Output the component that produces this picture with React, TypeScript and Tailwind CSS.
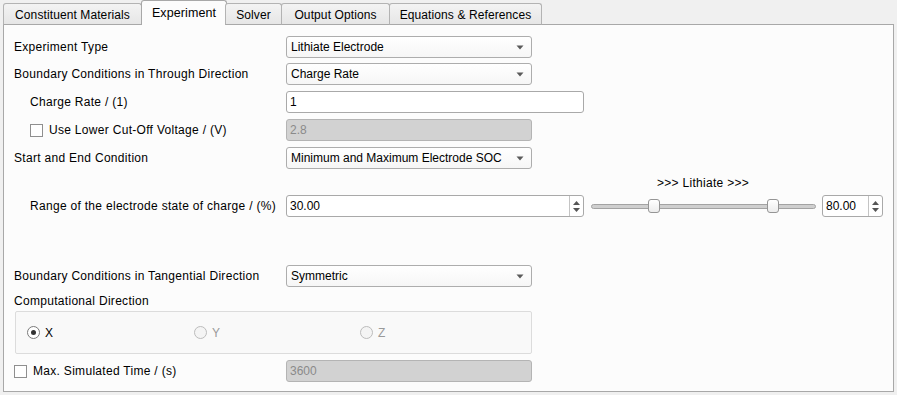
import React from "react";

function Arrow() {
  return (
    <svg width="8" height="5" viewBox="0 0 8 5" className="shrink-0">
      <path d="M0.5 0.5 L7.5 0.5 L4 4.5 Z" fill="#5a5a5a" />
    </svg>
  );
}

function Combo({ text, w = "w-[246px]" }: { text: string; w?: string }) {
  return (
    <div
      className={`${w} h-[22px] flex items-center justify-between pl-[4px] pr-[7px] rounded-[3px] border border-[#adadad] bg-gradient-to-b from-[#ffffff] to-[#f6f6f6] text-[12px] text-[#000] tracking-normal`}
    >
      <span>{text}</span>
      <Arrow />
    </div>
  );
}

function LineEdit({ text, w, disabled }: { text: string; w: string; disabled?: boolean }) {
  return (
    <div
      className={`${w} h-[22px] flex items-center pl-[3px] rounded-[3px] border text-[12px] tracking-normal ${
        disabled ? "bg-[#d2d2d2] border-[#b4b4b4] text-[#8a8a8a]" : "bg-white border-[#a9a9a9] text-black"
      }`}
    >
      {text}
    </div>
  );
}

function SpinArrows() {
  return (
    <div className="w-[14px] h-full flex flex-col items-center justify-center gap-[3px] border-l border-[#c4c4c4]">
      <svg width="7" height="4" viewBox="0 0 7 4">
        <path d="M0 4 L3.5 0 L7 4 Z" fill="#555" />
      </svg>
      <svg width="7" height="4" viewBox="0 0 7 4">
        <path d="M0 0 L3.5 4 L7 0 Z" fill="#555" />
      </svg>
    </div>
  );
}

function Spin({ text, w }: { text: string; w: string }) {
  return (
    <div className={`${w} h-[22px] flex items-stretch rounded-[3px] border border-[#a9a9a9] bg-white text-[12px] text-black overflow-hidden tracking-normal`}>
      <div className="flex-1 flex items-center pl-[3px]">{text}</div>
      <SpinArrows />
    </div>
  );
}

function Check() {
  return <div className="w-[13px] h-[13px] border border-[#8f8f8f] bg-white shrink-0" />;
}

function Radio({ checked, disabled, label }: { checked?: boolean; disabled?: boolean; label: string }) {
  return (
    <div className="flex items-center gap-[5px]">
      <div
        className={`w-[13px] h-[13px] rounded-full border flex items-center justify-center ${
          disabled ? "border-[#bcbcbc] bg-[#f4f4f4]" : "border-[#7a7a7a] bg-white"
        }`}
      >
        {checked && <div className="w-[5px] h-[5px] rounded-full bg-[#333]" />}
      </div>
      <span className={disabled ? "text-[#9a9a9a]" : "text-black"}>{label}</span>
    </div>
  );
}

function Row({ label, indent, children, mt }: { label: React.ReactNode; indent?: boolean; children: React.ReactNode; mt: string }) {
  return (
    <div className={`flex items-center h-[22px] ${mt}`}>
      <div className={`w-[272px] shrink-0 flex items-center ${indent ? "pl-[16px]" : ""}`}>{label}</div>
      {children}
    </div>
  );
}

export default function App() {
  const tabs = ["Constituent Materials", "Experiment", "Solver", "Output Options", "Equations & References"];
  const widths = ["w-[139px]", "w-[86px]", "w-[57px]", "w-[109px]", "w-[153px]"];
  return (
    <div className="w-[897px] h-[395px] bg-[#f0f0f0] text-[12px] text-black overflow-hidden font-['Liberation_Sans',Arial,sans-serif] tracking-[0.3px]">
      <div className="flex items-end h-[25px] pl-[3px] relative z-10 tracking-[0.1px]">
        {tabs.map((t, i) =>
          i === 1 ? (
            <div
              key={t}
              className={`${widths[i]} h-[25px] flex items-center justify-center bg-[#fcfcfc] border border-b-0 border-[#a8a8a8] rounded-t-[3px] -mx-px text-[12.5px]`}
            >
              {t}
            </div>
          ) : (
            <div
              key={t}
              className={`${widths[i]} h-[22px] flex items-center justify-center bg-gradient-to-b from-[#f3f3f3] to-[#e6e6e6] border border-[#b3b3b3] border-b-[#a8a8a8] rounded-t-[3px] ${i === 0 ? "" : "-ml-px"} pt-[1px]`}
            >
              {t}
            </div>
          )
        )}
      </div>
      <div className="mx-[3px] -mt-px h-[368px] border border-[#a8a8a8] bg-[#fcfcfc] pl-[10px] flex flex-col">
        <Row label="Experiment Type" mt="mt-[11px]">
          <Combo text="Lithiate Electrode" />
        </Row>
        <Row label="Boundary Conditions in Through Direction" mt="mt-[5px]">
          <Combo text="Charge Rate" />
        </Row>
        <Row label="Charge Rate / (1)" indent mt="mt-[6px]">
          <LineEdit text="1" w="w-[298px]" />
        </Row>
        <Row
          label={
            <div className="flex items-center gap-[6px]">
              <Check />
              <span>Use Lower Cut-Off Voltage / (V)</span>
            </div>
          }
          indent
          mt="mt-[6px]"
        >
          <LineEdit text="2.8" w="w-[246px]" disabled />
        </Row>
        <Row label="Start and End Condition" mt="mt-[6px]">
          <Combo text="Minimum and Maximum Electrode SOC" />
        </Row>
        <div className="h-[16px] mt-[6px] flex items-center pl-[577px]">
          <span className="w-[224px] text-center">&gt;&gt;&gt; Lithiate &gt;&gt;&gt;</span>
        </div>
        <Row label="Range of the electrode state of charge / (%)" indent mt="mt-[4px]">
          <Spin text="30.00" w="w-[298px]" />
          <div className="ml-[7px] w-[225px] h-[22px] relative flex items-center">
            <div className="w-full h-[5px] rounded-full bg-[#cfcfcf] border border-[#a3a3a3]" />
            <div className="absolute left-[57px] top-[4px] w-[12px] h-[14px] rounded-[3px] border border-[#959595] bg-gradient-to-b from-white to-[#ececec]" />
            <div className="absolute left-[176px] top-[4px] w-[12px] h-[14px] rounded-[3px] border border-[#959595] bg-gradient-to-b from-white to-[#ececec]" />
          </div>
          <div className="ml-[6px]">
            <Spin text="80.00" w="w-[61px]" />
          </div>
        </Row>
        <Row label="Boundary Conditions in Tangential Direction" mt="mt-[48px]">
          <Combo text="Symmetric" />
        </Row>
        <div className="h-[16px] mt-[6px] flex items-center">Computational Direction</div>
        <div className="mt-[2px] ml-[1px] w-[517px] h-[43px] border border-[#dcdcdc] rounded-[2px] bg-[#f9f9f9] flex items-center pl-[11px]">
          <div className="w-[167px]">
            <Radio checked label="X" />
          </div>
          <div className="w-[166px]">
            <Radio disabled label="Y" />
          </div>
          <div>
            <Radio disabled label="Z" />
          </div>
        </div>
        <Row
          label={
            <div className="flex items-center gap-[6px]">
              <Check />
              <span>Max. Simulated Time / (s)</span>
            </div>
          }
          mt="mt-[6px]"
        >
          <LineEdit text="3600" w="w-[246px]" disabled />
        </Row>
      </div>
    </div>
  );
}
